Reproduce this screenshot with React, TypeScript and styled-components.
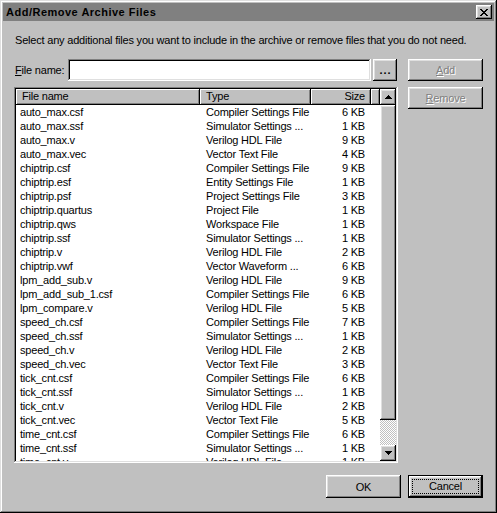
import styled, { createGlobalStyle } from 'styled-components'

const GlobalStyle = createGlobalStyle`
  html, body {
    margin: 0;
    padding: 0;
    background: #c0c0c0;
  }
  body {
    font-family: "Liberation Sans", Arial, sans-serif;
    font-size: 11px;
    letter-spacing: -0.2px;
    color: #000;
  }
`

const files: [string, string, string][] = [
  ['auto_max.csf', 'Compiler Settings File', '6 KB'],
  ['auto_max.ssf', 'Simulator Settings ...', '1 KB'],
  ['auto_max.v', 'Verilog HDL File', '9 KB'],
  ['auto_max.vec', 'Vector Text File', '4 KB'],
  ['chiptrip.csf', 'Compiler Settings File', '9 KB'],
  ['chiptrip.esf', 'Entity Settings File', '1 KB'],
  ['chiptrip.psf', 'Project Settings File', '3 KB'],
  ['chiptrip.quartus', 'Project File', '1 KB'],
  ['chiptrip.qws', 'Workspace File', '1 KB'],
  ['chiptrip.ssf', 'Simulator Settings ...', '1 KB'],
  ['chiptrip.v', 'Verilog HDL File', '2 KB'],
  ['chiptrip.vwf', 'Vector Waveform ...', '6 KB'],
  ['lpm_add_sub.v', 'Verilog HDL File', '9 KB'],
  ['lpm_add_sub_1.csf', 'Compiler Settings File', '6 KB'],
  ['lpm_compare.v', 'Verilog HDL File', '5 KB'],
  ['speed_ch.csf', 'Compiler Settings File', '7 KB'],
  ['speed_ch.ssf', 'Simulator Settings ...', '1 KB'],
  ['speed_ch.v', 'Verilog HDL File', '2 KB'],
  ['speed_ch.vec', 'Vector Text File', '3 KB'],
  ['tick_cnt.csf', 'Compiler Settings File', '6 KB'],
  ['tick_cnt.ssf', 'Simulator Settings ...', '1 KB'],
  ['tick_cnt.v', 'Verilog HDL File', '2 KB'],
  ['tick_cnt.vec', 'Vector Text File', '5 KB'],
  ['time_cnt.csf', 'Compiler Settings File', '6 KB'],
  ['time_cnt.ssf', 'Simulator Settings ...', '1 KB'],
  ['time_cnt.v', 'Verilog HDL File', '1 KB'],
]

const raised = `
  box-shadow: inset -1px -1px #000, inset 1px 1px #fff,
    inset -2px -2px #808080, inset 2px 2px #dfdfdf;
`

const sunken = `
  box-shadow: inset -1px -1px #fff, inset 1px 1px #808080,
    inset -2px -2px #dfdfdf, inset 2px 2px #000;
`

const Window = styled.div`
  width: 497px;
  height: 513px;
  box-sizing: border-box;
  padding: 3px;
  background: #c0c0c0;
  box-shadow: inset -1px -1px #000, inset 1px 1px #dfdfdf,
    inset -2px -2px #808080, inset 2px 2px #fff;
  display: flex;
  flex-direction: column;
`

const TitleBar = styled.div`
  height: 18px;
  background: #808080;
  display: flex;
  align-items: center;
  justify-content: space-between;
  padding-left: 3px;
  padding-right: 2px;
`

const TitleText = styled.span`
  font-weight: bold;
  font-size: 11px;
  letter-spacing: 0.5px;
  color: #000;
`

const CloseButton = styled.div`
  width: 16px;
  height: 14px;
  background: #c0c0c0;
  ${raised}
  display: flex;
  align-items: center;
  justify-content: center;
  padding-right: 1px;
  box-sizing: border-box;
`

const Body = styled.div`
  flex: 1;
  display: flex;
  flex-direction: column;
  padding: 12px 11px 0 11px;
`

const Instruction = styled.div`
  line-height: 14px;
  height: 14px;
  padding-left: 1px;
  white-space: nowrap;
`

const Main = styled.div`
  margin-top: 12px;
  display: grid;
  grid-template-columns: 384px 75px;
  grid-template-rows: 22px 376px;
  column-gap: 10px;
  row-gap: 6px;
`

const FileRow = styled.div`
  display: flex;
  align-items: center;
`

const Label = styled.span`
  width: 53px;
  padding-left: 1px;
  line-height: 14px;
`

const TextInput = styled.div`
  width: 303px;
  height: 22px;
  background: #fff;
  ${sunken}
`

const Button = styled.div<{ $disabled?: boolean; $w?: number; $h?: number }>`
  width: ${(p) => p.$w ?? 75}px;
  height: ${(p) => p.$h ?? 22}px;
  box-sizing: border-box;
  background: #c0c0c0;
  ${raised}
  display: flex;
  align-items: center;
  justify-content: center;
  color: ${(p) => (p.$disabled ? '#808080' : '#000')};
  text-shadow: ${(p) => (p.$disabled ? '1px 1px #fff' : 'none')};
  line-height: 14px;
`

const BrowseButton = styled(Button)`
  margin-left: 2px;
  font-weight: bold;
  letter-spacing: 1px;
  padding-left: 1px;
`

const SideButtons = styled.div`
  display: flex;
  flex-direction: column;
`

const DefaultButton = styled.div`
  width: 75px;
  height: 23px;
  box-sizing: border-box;
  padding: 4px;
  background: #c0c0c0;
  box-shadow: inset 0 0 0 1px #000, inset -2px -2px #000, inset 2px 2px #fff,
    inset -3px -3px #808080, inset 3px 3px #dfdfdf;
  display: flex;
`

const FocusRect = styled.span`
  flex: 1;
  border: 1px dotted #000;
  display: flex;
  align-items: center;
  justify-content: center;
  line-height: 13px;
`

const ListView = styled.div`
  background: #fff;
  ${sunken}
  padding: 2px;
  box-sizing: border-box;
  display: flex;
  overflow: hidden;
`

const TableArea = styled.div`
  flex: 1;
  overflow: hidden;
  display: flex;
  flex-direction: column;
`

const HeaderRow = styled.div`
  display: flex;
  height: 16px;
  flex-shrink: 0;
`

const HeaderCell = styled.div<{ $w: number; $right?: boolean }>`
  width: ${(p) => p.$w}px;
  flex-shrink: 0;
  box-sizing: border-box;
  background: #c0c0c0;
  box-shadow: inset -1px -1px #000, inset 1px 1px #fff, inset -2px -2px #808080;
  line-height: 15px;
  padding: 0 6px;
  text-align: ${(p) => (p.$right ? 'right' : 'left')};
`

const HeaderFill = styled.div`
  flex: 1;
  background: #c0c0c0;
  box-shadow: inset -1px -1px #000, inset 1px 1px #fff, inset -2px -2px #808080;
`

const Row = styled.div`
  display: flex;
  height: 14px;
  line-height: 14px;
  flex-shrink: 0;
  white-space: nowrap;
`

const Cell = styled.div<{ $w: number; $pl?: number; $right?: boolean }>`
  width: ${(p) => p.$w}px;
  flex-shrink: 0;
  box-sizing: border-box;
  padding-left: ${(p) => p.$pl ?? 6}px;
  padding-right: ${(p) => (p.$right ? 6 : 0)}px;
  text-align: ${(p) => (p.$right ? 'right' : 'left')};
  overflow: hidden;
`

const ScrollBar = styled.div`
  width: 16px;
  display: flex;
  flex-direction: column;
`

const ArrowButton = styled.div`
  width: 16px;
  height: 16px;
  background: #c0c0c0;
  ${raised}
  display: flex;
  align-items: center;
  justify-content: center;
`

const Thumb = styled.div`
  height: 315px;
  background: #c0c0c0;
  ${raised}
`

const Track = styled.div`
  flex: 1;
  background-color: #c0c0c0;
  background-image: conic-gradient(#fff 25%, #c0c0c0 0 50%, #fff 0 75%, #c0c0c0 0);
  background-size: 2px 2px;
`

const Footer = styled.div`
  margin-top: 12px;
  display: flex;
  justify-content: flex-end;
  gap: 7px;
`

const Arrow = ({ down }: { down?: boolean }) => (
  <svg width="7" height="4" viewBox="0 0 7 4" shapeRendering="crispEdges">
    <path d={down ? 'M0 0H7L3.5 4Z' : 'M3.5 0L7 4H0Z'} fill="#000" />
  </svg>
)

const CloseGlyph = () => (
  <svg width="8" height="7" viewBox="0 0 8 7" shapeRendering="crispEdges">
    <path
      d="M0 0h2v1h1v1h2V1h1V0h2v1H7v1H6v1H5v1h1v1h1v1h1v1H6V6H5V5H3v1H2v1H0V6h1V5h1V4h1V3H2V2H1V1H0Z"
      fill="#000"
    />
  </svg>
)

export default function App() {
  return (
    <>
      <GlobalStyle />
      <Window>
        <TitleBar>
          <TitleText>Add/Remove Archive Files</TitleText>
          <CloseButton>
            <CloseGlyph />
          </CloseButton>
        </TitleBar>
        <Body>
          <Instruction>
            Select any additional files you want to include in the archive or remove files that you do not need.
          </Instruction>
          <Main>
            <FileRow>
              <Label>
                <u>F</u>ile name:
              </Label>
              <TextInput />
              <BrowseButton $w={24}>...</BrowseButton>
            </FileRow>
            <Button $disabled>
              <span>
                <u>A</u>dd
              </span>
            </Button>
            <ListView>
              <TableArea>
                <HeaderRow>
                  <HeaderCell $w={184}>File name</HeaderCell>
                  <HeaderCell $w={111}>Type</HeaderCell>
                  <HeaderCell $w={60} $right>
                    Size
                  </HeaderCell>
                  <HeaderFill />
                </HeaderRow>
                {files.map(([name, type, size]) => (
                  <Row key={name}>
                    <Cell $w={184} $pl={4}>
                      {name}
                    </Cell>
                    <Cell $w={111}>{type}</Cell>
                    <Cell $w={60} $right>
                      {size}
                    </Cell>
                  </Row>
                ))}
              </TableArea>
              <ScrollBar>
                <ArrowButton>
                  <Arrow />
                </ArrowButton>
                <Thumb />
                <Track />
                <ArrowButton>
                  <Arrow down />
                </ArrowButton>
              </ScrollBar>
            </ListView>
            <SideButtons>
              <Button $disabled>
                <span>
                  <u>R</u>emove
                </span>
              </Button>
            </SideButtons>
          </Main>
          <Footer>
            <Button $h={23}>OK</Button>
            <DefaultButton>
              <FocusRect>Cancel</FocusRect>
            </DefaultButton>
          </Footer>
        </Body>
      </Window>
    </>
  )
}
